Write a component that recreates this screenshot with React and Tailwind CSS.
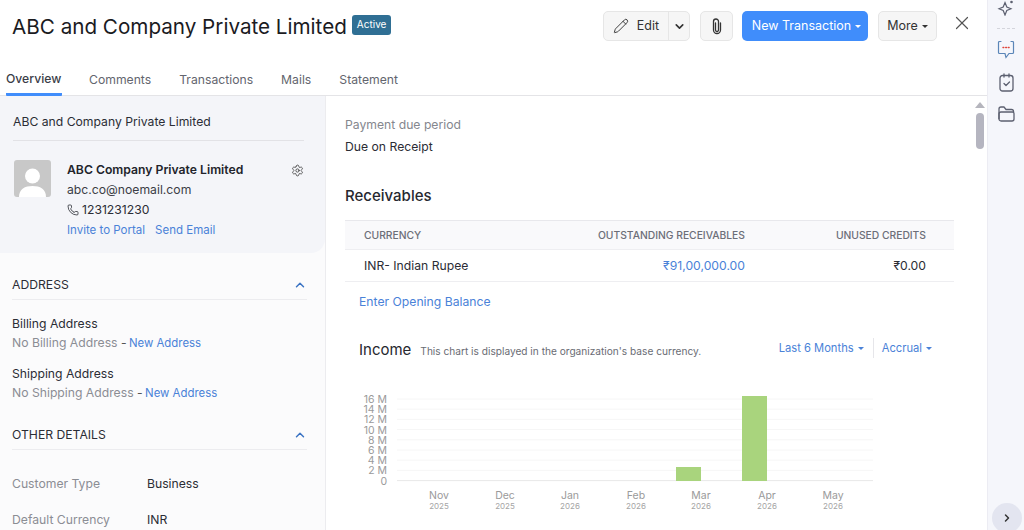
import React from 'react';
import { Pencil, ChevronDown, ChevronUp, ChevronRight, X, Settings, Phone } from 'lucide-react';

const tabs = ['Comments', 'Transactions', 'Mails', 'Statement'];
const yLabels = ['16 M', '14 M', '12 M', '10 M', '8 M', '6 M', '4 M', '2 M', '0'];
const months = [
  ['Nov', '2025', 99],
  ['Dec', '2025', 165],
  ['Jan', '2026', 230],
  ['Feb', '2026', 296],
  ['Mar', '2026', 361],
  ['Apr', '2026', 427],
  ['May', '2026', 493],
];

function Caret() {
  return <span className="inline-block ml-1 align-middle w-0 h-0 border-x-[3px] border-x-transparent border-t-[3px] border-t-current" />;
}

function IncomeChart() {
  return (
    <svg width="560" height="130" viewBox="0 0 560 130" className="block" style={{ fontFamily: 'Inter, sans-serif' }}>
      {yLabels.map((l, i) => (
        <g key={l}>
          <line x1="57" x2="533" y1={19 + i * 10.2} y2={19 + i * 10.2} stroke={i === 8 ? '#e8e8e8' : '#f6f6f6'} />
          <text x="47" y={23 + i * 10.2} textAnchor="end" fontSize="10.5" fill="#9a9a9a">{l}</text>
        </g>
      ))}
      <rect x="336" y="87" width="25" height="14" fill="#a9d47d" />
      <rect x="402" y="16" width="25" height="85" fill="#a9d47d" />
      {months.map(([m, y, x]) => (
        <g key={m}>
          <text x={x} y="119" textAnchor="middle" fontSize="10.5" fill="#9a9a9a">{m}</text>
          <text x={x} y="129" textAnchor="middle" fontSize="8" fill="#a5a5a5">{y}</text>
        </g>
      ))}
    </svg>
  );
}

export default function App() {
  return (
    <div className="w-[1024px] h-[530px] overflow-hidden flex bg-white text-[#21263c] font-['Inter',sans-serif]">
      <div className="w-[987px] flex flex-col">
        {/* Header */}
        <div className="h-[62px] pt-[10px] pl-3 pr-[14px] flex items-start justify-between">
          <div className="flex items-start">
            <h1 className="text-[20.65px] leading-[32px] mt-[1px] text-[#1b1b1f]">ABC and Company Private Limited</h1>
            <span className="ml-[5px] mt-[5px] h-5 px-[5px] rounded-[3px] bg-[#2f6f94] text-white text-[10px] leading-[18px]">Active</span>
          </div>
          <div className="flex items-start pt-[1px]">
            <div className="flex w-[87px] h-[30px] rounded-[5px] border border-[#e6e6e6] bg-[#f6f6f6] text-[12.5px] text-[#333]">
              <div className="w-[64px] flex items-center justify-center gap-2">
                <Pencil size={16} strokeWidth={1.4} />Edit
              </div>
              <div className="flex-1 border-l border-[#e6e6e6] flex items-center justify-center">
                <ChevronDown size={13} strokeWidth={3} />
              </div>
            </div>
            <div className="ml-[10px] w-[33px] h-[30px] rounded-[5px] border border-[#e6e6e6] bg-[#f6f6f6] flex items-center justify-center">
              <svg width="10" height="17" viewBox="0 0 10 17" fill="none" stroke="#333" strokeWidth="1.3" strokeLinecap="round">
                <path d="M3.500 5v7a1.500 1.500 0 0 0 3 0V3.500a2.500 2.500 0 0 0-5 0V12a3.500 3.500 0 0 0 7 0V5" />
              </svg>
            </div>
            <div className="ml-[9px] w-[126px] h-[30px] pl-[3px] rounded-[5px] bg-[#408dfb] text-white text-[12.5px] flex items-center justify-center">
              New Transaction<Caret />
            </div>
            <div className="ml-[10px] w-[59px] h-[30px] rounded-[5px] border border-[#e6e6e6] bg-[#f6f6f6] text-[12.5px] text-[#333] flex items-center justify-center">
              More<Caret />
            </div>
            <X size={22} strokeWidth={1.3} className="ml-[14px] mt-[1px] text-[#555]" />
          </div>
        </div>

        {/* Tabs */}
        <div className="h-[34px] pl-[6px] flex items-start border-b border-[#e4e4e7] text-[12.2px] text-[#63656e]">
          <div className="w-[56px] h-[34px] pt-[8px] border-b-[3px] border-[#408dfb] rounded-b-[1px] font-medium text-[#3a3d47] whitespace-nowrap">Overview</div>
          <div className="ml-[27px] pt-[9px]">{tabs[0]}</div>
          <div className="ml-[28px] pt-[9px]">{tabs[1]}</div>
          <div className="ml-[28px] pt-[9px]">{tabs[2]}</div>
          <div className="ml-[28px] pt-[9px]">{tabs[3]}</div>
        </div>

        <div className="flex-1 flex min-h-0">
          {/* Left panel */}
          <div className="w-[326px] shrink-0 bg-[#fbfbfc] border-r border-[#ececef] text-[12.2px]">
            <div className="h-[157px] bg-[#f4f5f9] rounded-br-[14px] pl-[13px] pr-[21px] pt-[18px]">
              <div className="leading-[15px] pb-[11px] border-b border-[#e2e2e6] text-[#2b2d35]">ABC and Company Private Limited</div>
              <div className="mt-[19px] flex">
                <div className="ml-[1px] w-[37px] h-[37px] rounded-[3px] bg-[#c8c8c8] overflow-hidden shrink-0">
                  <svg viewBox="0 0 37 37" className="w-full h-full">
                    <circle cx="18.500" cy="16" r="7.500" fill="#fff" />
                    <path d="M5 37c0-8 6-11 13.500-11S32 29 32 37z" fill="#fff" />
                  </svg>
                </div>
                <div className="ml-4 flex-1 min-w-0 pt-[2px]">
                  <div className="flex justify-between items-start">
                    <span className="font-semibold text-[#22242b] leading-[16px]">ABC Company Private Limited</span>
                    <Settings size={13} strokeWidth={1.6} className="mt-[2px] text-[#444]" />
                  </div>
                  <div className="mt-[4px] leading-[16px] text-[#3b3d45]">abc.co@noemail.com</div>
                  <div className="mt-[4px] leading-[16px] flex items-center gap-[3px] text-[#2b2d35]"><Phone size={12} strokeWidth={1.6} />1231231230</div>
                  <div className="mt-[4px] leading-[16px] text-[11.5px] text-[#4a82d8]"><span>Invite to Portal</span><span className="ml-[10px]">Send Email</span></div>
                </div>
              </div>
            </div>

            <div className="pl-3 pr-[18px]">
              <div className="mt-[24px] pb-[6px] flex justify-between items-center border-b border-[#ececef] leading-[16px] text-[#2b2d35]">
                ADDRESS<ChevronUp size={14} strokeWidth={2.5} className="text-[#3b74c4]" />
              </div>
              <div className="mt-[16px] leading-[16px] text-[#2b2d35]">Billing Address</div>
              <div className="mt-[3px] leading-[16px] text-[#8b8d94]">No Billing Address <span className="text-[#555]">-</span> <span className="text-[#4a82d8] text-[11.4px] -ml-[1px]">New Address</span></div>
              <div className="mt-[15px] leading-[16px] text-[#2b2d35]">Shipping Address</div>
              <div className="mt-[3px] leading-[16px] text-[#8b8d94]">No Shipping Address <span className="text-[#555]">-</span> <span className="text-[#4a82d8] text-[11.4px] -ml-[1px]">New Address</span></div>
              <div className="mt-[26px] pb-[6px] flex justify-between items-center border-b border-[#ececef] leading-[16px] text-[#2b2d35]">
                OTHER DETAILS<ChevronUp size={14} strokeWidth={2.5} className="text-[#3b74c4]" />
              </div>
              <div className="mt-[26px] flex leading-[16px]"><span className="w-[135px] text-[#8b8d94]">Customer Type</span><span className="text-[#2b2d35]">Business</span></div>
              <div className="mt-[20px] flex leading-[16px]"><span className="w-[135px] text-[#8b8d94]">Default Currency</span><span className="text-[#2b2d35]">INR</span></div>
            </div>
          </div>

          {/* Right content */}
          <div className="flex-1 relative pl-[19px] text-[12.2px] overflow-hidden">
            <div className="mt-[21px] leading-[16px] text-[#85878e]">Payment due period</div>
            <div className="mt-[6px] leading-[16px] text-[#2b2d35]">Due on Receipt</div>
            <div className="mt-[31px] text-[15px] leading-[20px] font-medium text-[#26282f]">Receivables</div>

            <div className="mt-[14px] w-[609px]">
              <div className="h-[29px] pl-[19px] pr-[28px] pt-[1px] flex items-center bg-[#f9f9fb] border-t border-[#e8e8ec] text-[10.3px] font-medium text-[#6c6e78]">
                <span className="flex-1">CURRENCY</span>
                <span>OUTSTANDING RECEIVABLES</span>
                <span className="w-[181px] text-right">UNUSED CREDITS</span>
              </div>
              <div className="h-[33px] pl-[19px] pr-[28px] flex items-center border-y border-[#eeeef1]">
                <span className="flex-1 text-[#2b2d35] pt-[1px]">INR- Indian Rupee</span>
                <span className="text-[#4a82d8] pt-[1px]">₹91,00,000.00</span>
                <span className="w-[181px] text-right text-[#2b2d35] pt-[1px]">₹0.00</span>
              </div>
            </div>
            <div className="mt-[12px] ml-[14px] leading-[16px] text-[#4a82d8]">Enter Opening Balance</div>

            <div className="mt-[26px] ml-[14px] w-[573px] flex justify-between items-start">
              <div className="flex items-baseline gap-[9px] mt-[4px]">
                <span className="text-[15px] leading-[20px] text-[#26282f]">Income</span>
                <span className="text-[10.15px] text-[#6a6c74]">This chart is displayed in the organization's base currency.</span>
              </div>
              <div className="flex items-center text-[11.2px] text-[#4a82d8] leading-[16px] mt-[2px]">
                <span className="pr-[9px] border-r border-[#e6e6ea] h-[20px] flex items-center">Last 6 Months<Caret /></span>
                <span className="pl-[8px]">Accrual<Caret /></span>
              </div>
            </div>
            <div className="mt-[20px] -ml-[5px]"><IncomeChart /></div>

            {/* Scrollbar */}
            <div className="absolute right-[3px] top-[6px] w-[9px] flex flex-col items-center">
              <div className="w-0 h-0 border-x-[5px] border-x-transparent border-b-[6px] border-b-[#b5b5bd]" />
              <div className="mt-[5px] w-[8px] h-[36px] rounded-full bg-[#b5b5c0]" />
            </div>
          </div>
        </div>
      </div>

      {/* Right rail */}
      <div className="w-[37px] shrink-0 relative bg-[#f5f6fb] border-l border-[#ececf3] flex flex-col items-center">
        <svg width="18" height="18" viewBox="0 0 18 18" fill="none" stroke="#5c6070" strokeWidth="1.2" className="-mt-[2px]">
          <path d="M8 4.500 9.800 9 14 10.800 9.800 12.500 8 17 6.200 12.500 2 10.800 6.200 9z" />
          <circle cx="14.500" cy="4" r="1.300" fill="#5c6070" stroke="none" />
        </svg>
        <div className="mt-[12px] w-[18px] border-t border-dashed border-[#d4d5dc]" />
        <div className="mt-[11px]">
          <svg width="18" height="19" viewBox="0 0 18 19" fill="none" stroke="#5b86b8" strokeWidth="1.200" strokeLinecap="round">
            <path d="M4 1.500H2.500a1 1 0 0 0-1 1v10a1 1 0 0 0 1 1H8l1 4 3-4h3.500a1 1 0 0 0 1-1v-10a1 1 0 0 0-1-1H14" />
            <path d="M6 7.500h.8M8.700 7.500h.8M11.300 7.500h.8" stroke="#e0453a" strokeWidth="1.400" />
          </svg>
        </div>
        <div className="mt-[14px]">
          <svg width="15" height="19" viewBox="0 0 15 19" fill="none" stroke="#5c6070" strokeWidth="1.300" strokeLinecap="round" strokeLinejoin="round">
            <rect x="1" y="2.500" width="13" height="15.500" rx="2.500" />
            <path d="M5 1v3M10 1v3M5 10.500l2 2 3.500-3.500" />
          </svg>
        </div>
        <div className="mt-[14px]">
          <svg width="17" height="16" viewBox="0 0 17 16" fill="none" stroke="#5c6070" strokeWidth="1.300" strokeLinejoin="round">
            <path d="M1 13V3a2 2 0 0 1 2-2h3l2 2.500h5.500a2 2 0 0 1 2 2V6" />
            <path d="M1 8a2 2 0 0 1 2-2h11.500a1.500 1.500 0 0 1 1.500 1.500V13a2 2 0 0 1-2 2H3a2 2 0 0 1-2-2z" />
          </svg>
        </div>
        <div className="absolute left-[4px] bottom-[-3px] w-[30px] h-[30px] rounded-full bg-[#e3e5f0] flex items-center justify-center text-[#333]">
          <ChevronRight size={12} strokeWidth={3} />
        </div>
      </div>
    </div>
  );
}
